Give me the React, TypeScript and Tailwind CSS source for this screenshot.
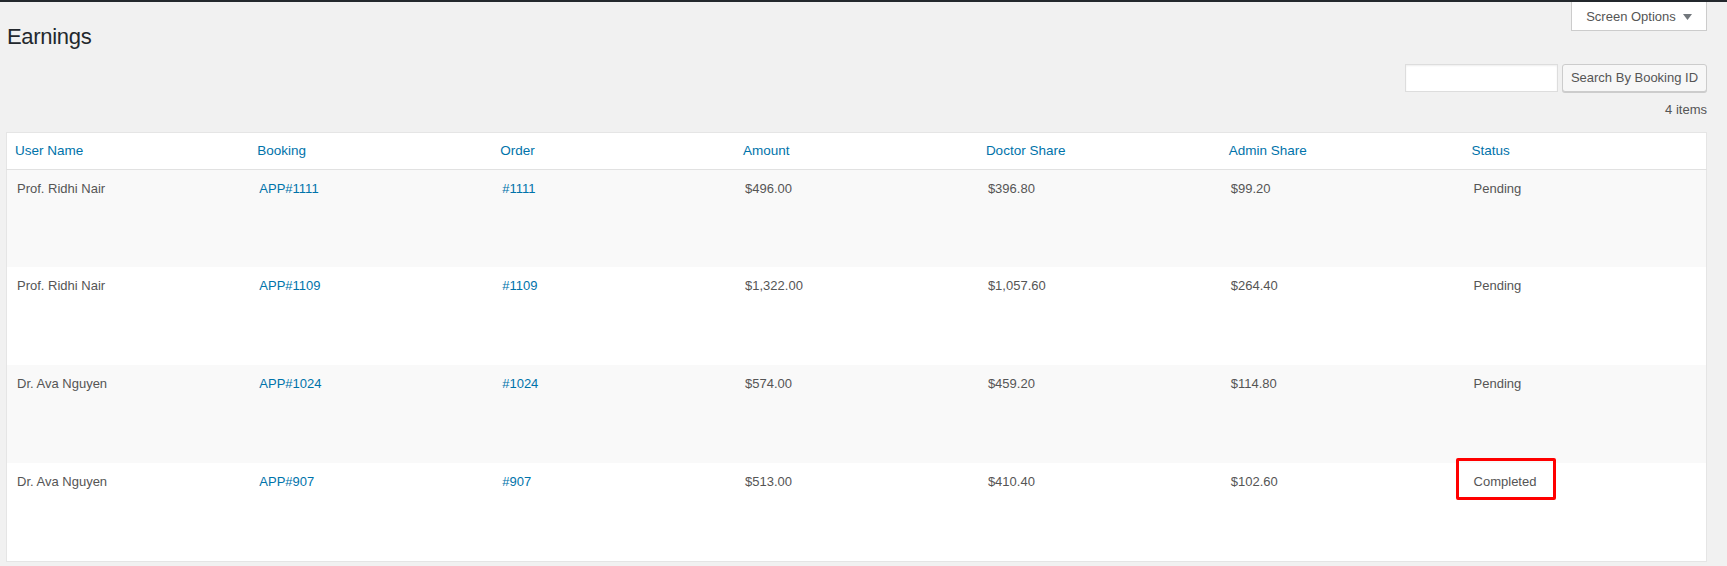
import { useState } from "react";

type Earning = {
  user: string;
  booking: string;
  order: string;
  amount: string;
  doctor: string;
  admin: string;
  status: string;
};

const earnings: Earning[] = [
  { user: "Prof. Ridhi Nair", booking: "APP#1111", order: "#1111", amount: "$496.00", doctor: "$396.80", admin: "$99.20", status: "Pending" },
  { user: "Prof. Ridhi Nair", booking: "APP#1109", order: "#1109", amount: "$1,322.00", doctor: "$1,057.60", admin: "$264.40", status: "Pending" },
  { user: "Dr. Ava Nguyen", booking: "APP#1024", order: "#1024", amount: "$574.00", doctor: "$459.20", admin: "$114.80", status: "Pending" },
  { user: "Dr. Ava Nguyen", booking: "APP#907", order: "#907", amount: "$513.00", doctor: "$410.40", admin: "$102.60", status: "Completed" },
];

const columns = ["User Name", "Booking", "Order", "Amount", "Doctor Share", "Admin Share", "Status"];

export default function App() {
  const [query, setQuery] = useState("");

  return (
    <div className="min-h-screen bg-[#f1f1f1] font-['Liberation_Sans',Arial,sans-serif] text-[13px] text-[#555]">
      <div className="h-[2px] bg-[#23282d]" />

      <div className="pl-[6px] pr-[20px]">
        {/* Title + screen options */}
        <div className="flex items-start justify-between">
          <h1 className="pt-[19.6px] pl-[1px] text-[22px] leading-[29px] tracking-[-0.3px] text-[#23282d]">
            Earnings
          </h1>
          <button className="flex h-[29px] w-[136px] items-center justify-center gap-[7px] border border-t-0 border-[#ccc] bg-white pt-[1px] text-[13px] text-[#555]">
            <span>Screen Options</span>
            <svg width="9" height="6" viewBox="0 0 9 6">
              <path d="M0 0h9L4.5 6z" fill="#72777c" />
            </svg>
          </button>
        </div>

        {/* Search */}
        <div className="mt-[13.4px] flex justify-end gap-[4px]">
          <input
            value={query}
            onChange={(e) => setQuery(e.target.value)}
            className="h-[28px] w-[153px] border border-[#ddd] bg-white px-[6px] shadow-[inset_0_1px_2px_rgba(0,0,0,0.07)] outline-none"
          />
          <button className="h-[28px] w-[145px] whitespace-nowrap rounded-[3px] border border-[#ccc] bg-[#f7f7f7] text-[13px] text-[#555] shadow-[0_1px_0_#ccc]">
            Search By Booking ID
          </button>
        </div>

        <div className="mt-[8.25px] text-right leading-[19.5px] text-[#555]">4 items</div>

        {/* Table */}
        <table className="mt-[12.25px] w-full table-fixed border border-[#e5e5e5] bg-white">
          <thead>
            <tr>
              {columns.map((col) => (
                <th
                  key={col}
                  className="h-[37px] border-b border-[#e1e1e1] pl-[8px] pt-[1px] text-left align-middle text-[13.5px] leading-[20px] font-normal text-[#0073aa]"
                >
                  {col}
                </th>
              ))}
            </tr>
          </thead>
          <tbody>
            {earnings.map((row, i) => (
              <tr key={row.booking} className={i % 2 === 0 ? "bg-[#f9f9f9]" : "bg-white"}>
                <td className="h-[98px] pl-[10px] pt-[9px] align-top leading-[19.5px]">{row.user}</td>
                <td className="h-[98px] pl-[10px] pt-[9px] align-top leading-[19.5px] text-[#0073aa]">{row.booking}</td>
                <td className="h-[98px] pl-[10px] pt-[9px] align-top leading-[19.5px] text-[#0073aa]">{row.order}</td>
                <td className="h-[98px] pl-[10px] pt-[9px] align-top leading-[19.5px]">{row.amount}</td>
                <td className="h-[98px] pl-[10px] pt-[9px] align-top leading-[19.5px]">{row.doctor}</td>
                <td className="h-[98px] pl-[10px] pt-[9px] align-top leading-[19.5px]">{row.admin}</td>
                <td className="relative h-[98px] pl-[10px] pt-[9px] align-top leading-[19.5px]">
                  {row.status}
                  {row.status === "Completed" && (
                    <span className="absolute left-[-8px] top-[-5px] h-[42px] w-[100px] rounded-[2px] border-[3px] border-[#ff0000]" />
                  )}
                </td>
              </tr>
            ))}
          </tbody>
        </table>
      </div>
    </div>
  );
}
